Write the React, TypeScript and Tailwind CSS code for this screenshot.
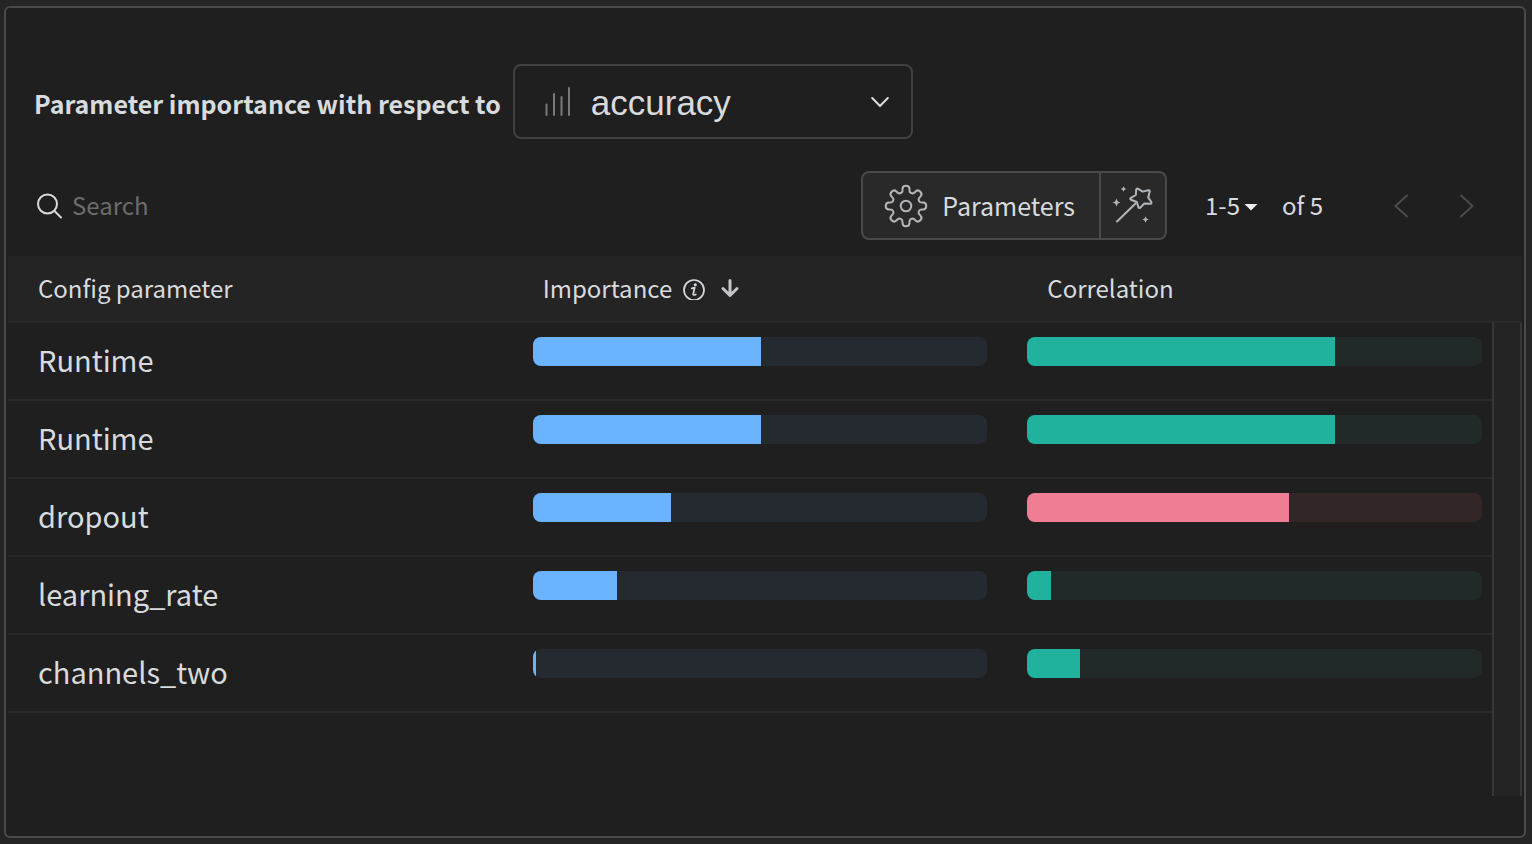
import React from "react";

type Tone = "blue" | "green" | "pink";

const tones: Record<Tone, { track: string; fill: string }> = {
  blue: { track: "bg-[#252a31]", fill: "bg-[#6bb2ff]" },
  green: { track: "bg-[#212a28]", fill: "bg-[#20b29c]" },
  pink: { track: "bg-[#322627]", fill: "bg-[#ef7e94]" },
};

const rows = [
  { name: "Runtime", importance: 50.2, correlation: 67.7, tone: "green" as Tone },
  { name: "Runtime", importance: 50.2, correlation: 67.7, tone: "green" as Tone },
  { name: "dropout", importance: 30.4, correlation: 57.6, tone: "pink" as Tone },
  { name: "learning_rate", importance: 18.5, correlation: 5.3, tone: "green" as Tone },
  { name: "channels_two", importance: 0.7, correlation: 11.6, tone: "green" as Tone },
];

function Bar({ value, tone, label }: { value: number; tone: Tone; label: string }) {
  return (
    <div
      role="meter"
      aria-label={label}
      aria-valuenow={value}
      aria-valuemin={0}
      aria-valuemax={100}
      className={`h-[29px] overflow-hidden rounded-lg ${tones[tone].track}`}
    >
      <div className={`h-full ${tones[tone].fill}`} style={{ width: `${value}%` }} />
    </div>
  );
}

// Eight rounded teeth joined by rounded valleys.
function gearPath() {
  const point = (r: number, deg: number) => {
    const a = (deg * Math.PI) / 180;
    return `${(22 + r * Math.sin(a)).toFixed(2)} ${(22 - r * Math.cos(a)).toFixed(2)}`;
  };
  let d = `M${point(14.2, -17)}`;
  for (let i = 0; i < 8; i++) {
    const c = i * 45;
    d += `Q${point(14.8, c - 13)} ${point(17.4, c - 11.5)}`;
    d += `C${point(21.6, c - 9)} ${point(21.6, c + 9)} ${point(17.4, c + 11.5)}`;
    d += `Q${point(14.8, c + 13)} ${point(14.2, c + 17)}`;
    d += `Q${point(13.8, c + 22.5)} ${point(14.2, c + 28)}`;
  }
  return d + "Z";
}

function GearIcon() {
  return (
    <svg className="size-11 shrink-0" viewBox="0 0 44 44" fill="none" stroke="#b3b6b9" strokeWidth="2" strokeLinejoin="round" aria-hidden="true">
      <path d={gearPath()} />
      <circle cx="22" cy="22" r="5.3" />
    </svg>
  );
}

function WandIcon() {
  return (
    <svg className="size-11" viewBox="0 0 44 44" fill="none" stroke="#b3b6b9" strokeWidth="2" strokeLinecap="round" strokeLinejoin="round" aria-hidden="true">
      <path d="M6 37.5 24.5 19.5" />
      <path d="M25.2 5.6Q25.8 4 27.2 4.9L31.6 7.6 37.4 6.2Q39 6 38.7 7.6L37.2 13.4 40.3 18Q41 19.6 39.3 19.8L33.2 19.6 29.2 23.8Q27.9 24.6 27.4 23.2L25.8 18 19.9 15.7Q18.6 14.8 19.9 13.8L24.8 11Z" />
      <path fill="#b3b6b9" stroke="none" d="M5.5 14.5 6.8 17.4 9.5 18.5 6.8 19.6 5.5 22.5 4.2 19.6 1.5 18.5 4.2 17.4ZM12.5 2.3 13.4 4.1 15.2 5 13.4 5.9 12.5 7.7 11.6 5.9 9.8 5 11.6 4.1ZM34.5 32.3 35.5 34.5 37.7 35.5 35.5 36.5 34.5 38.7 33.5 36.5 31.3 35.5 33.5 34.5Z" />
    </svg>
  );
}

export default function App() {
  return (
    <main className="flex min-h-screen flex-col bg-[#252525] pt-1.5 pr-1.5 pb-1.5 pl-1 font-['Noto_Sans_CJK_SC',sans-serif] text-[#d8dbde]">
      <section className="flex flex-1 flex-col rounded-md border-2 border-[#4a4a4a] bg-[#1f1f1f] pt-14 pr-0.5 pb-10 pl-0.5">
        <div className="flex items-center gap-3 pl-[26px]">
          <label htmlFor="metric" className="pt-1 text-[25px] font-semibold text-[#d8dbde]">
            Parameter importance with respect to
          </label>
          <div className="relative w-[400px]">
            <select
              id="metric"
              className="h-[75px] w-full appearance-none rounded-lg border-2 border-[#414141] bg-transparent pt-1 pl-[76px] font-['Liberation_Sans',sans-serif] text-[35px]"
            >
              <option>accuracy</option>
            </select>
            <svg className="pointer-events-none absolute top-[22px] left-[30px] h-8 w-8" viewBox="0 0 32 32" stroke="#77797b" strokeWidth="2" strokeLinecap="round" aria-hidden="true">
              <path d="M3.5 18.5V29M11 8V29M18.5 11V29M26 2V29" />
            </svg>
            <svg className="pointer-events-none absolute top-[30px] right-6 h-4 w-[18px]" viewBox="0 0 18 16" fill="none" stroke="#d8dbde" strokeWidth="2" strokeLinecap="round" strokeLinejoin="round" aria-hidden="true">
              <path d="M1.2 4 9 12 16.8 4" />
            </svg>
          </div>
        </div>

        <div className="mt-8 mb-4 flex items-center pr-[45px] pl-7">
          <label className="flex flex-1 items-center gap-2">
            <svg className="size-7 shrink-0" viewBox="0 0 28 28" fill="none" stroke="#d8dbde" strokeWidth="2" strokeLinecap="round" aria-hidden="true">
              <circle cx="11.5" cy="12" r="9.5" />
              <path d="M18.5 19 25 25.5" />
            </svg>
            <input
              type="text"
              aria-label="Search"
              placeholder="Search"
              className="w-full bg-transparent pb-0.5 text-2xl outline-none placeholder:text-[#6c6c6c]"
            />
          </label>
          <div className="flex h-[69px] rounded-lg border-2 border-[#4a4a4a] bg-[#292929]">
            <button type="button" className="flex items-center gap-3.5 pr-6 pl-[21px] text-[25px]">
              <GearIcon />
              Parameters
            </button>
            <button type="button" aria-label="Auto select parameters" className="flex w-[66px] items-center justify-center border-l-2 border-[#4a4a4a]">
              <WandIcon />
            </button>
          </div>
          <button type="button" className="ml-[38px] flex items-center gap-1 pb-0.5 text-2xl">
            1-5
            <svg className="mt-1 h-2 w-3.5" viewBox="0 0 14 8" fill="#f0f0f0" aria-hidden="true">
              <path d="M.5 1H13.5L7 7.5Z" />
            </svg>
          </button>
          <span className="ml-6 pb-0.5 text-2xl">of 5</span>
          <button type="button" aria-label="Previous page" className="ml-[68px]">
            <svg className="h-6 w-5" viewBox="0 0 20 24" fill="none" stroke="#4b4b4b" strokeWidth="2" strokeLinecap="round" aria-hidden="true">
              <path d="M16 1.5 4.5 12 16 22.5" />
            </svg>
          </button>
          <button type="button" aria-label="Next page" className="ml-[46px]">
            <svg className="h-6 w-5" viewBox="0 0 20 24" fill="none" stroke="#4b4b4b" strokeWidth="2" strokeLinecap="round" aria-hidden="true">
              <path d="M4 1.5 15.5 12 4 22.5" />
            </svg>
          </button>
        </div>

        <table className="flex flex-1 flex-col text-left">
          <thead className="block border-b-2 border-[#292929] bg-[#242424]">
            <tr className="grid h-[65px] grid-cols-3 items-center pb-0.5 text-2xl">
              <th className="pl-[30px] font-normal">Config parameter</th>
              <th className="flex items-center pl-[30px] font-normal">
                Importance
                <svg className="ml-2.5 size-6" viewBox="0 0 24 24" fill="none" stroke="#d8dbde" strokeWidth="1.7" strokeLinecap="round" strokeLinejoin="round" aria-hidden="true">
                  <circle cx="12" cy="14" r="10" />
                  <path d="M9.8 12.4 12.7 11.6 11.2 18Q11 19.8 13.8 18.4" />
                  <circle cx="13.3" cy="8.7" r=".7" fill="#d8dbde" />
                </svg>
                <svg className="ml-3.5 h-6 w-5" viewBox="0 0 20 24" fill="none" stroke="#c4c6c9" strokeWidth="3" strokeLinecap="round" strokeLinejoin="round" aria-hidden="true">
                  <path d="M10 4.5V19M3 12.5 10 19.5 17 12.5" />
                </svg>
              </th>
              <th className="pl-[30px] font-normal">Correlation</th>
            </tr>
          </thead>
          <tbody className="relative block flex-1 pr-[30px] after:absolute after:inset-y-0 after:right-0 after:w-[30px] after:border-x-2 after:border-[#363636] after:bg-[#242424]">
            {rows.map((row, i) => (
              <tr key={i} className="grid h-[78px] grid-cols-3 border-b-2 border-[#292929]">
                <td className="self-center pb-0.5 pl-[30px] text-[29px]">{row.name}</td>
                <td className="pt-3.5 pr-2.5 pl-[30px]">
                  <Bar value={row.importance} tone="blue" label={`${row.name} importance`} />
                </td>
                <td className="pt-3.5 pr-2.5 pl-[30px]">
                  <Bar value={row.correlation} tone={row.tone} label={`${row.name} correlation`} />
                </td>
              </tr>
            ))}
          </tbody>
        </table>
      </section>
    </main>
  );
}
